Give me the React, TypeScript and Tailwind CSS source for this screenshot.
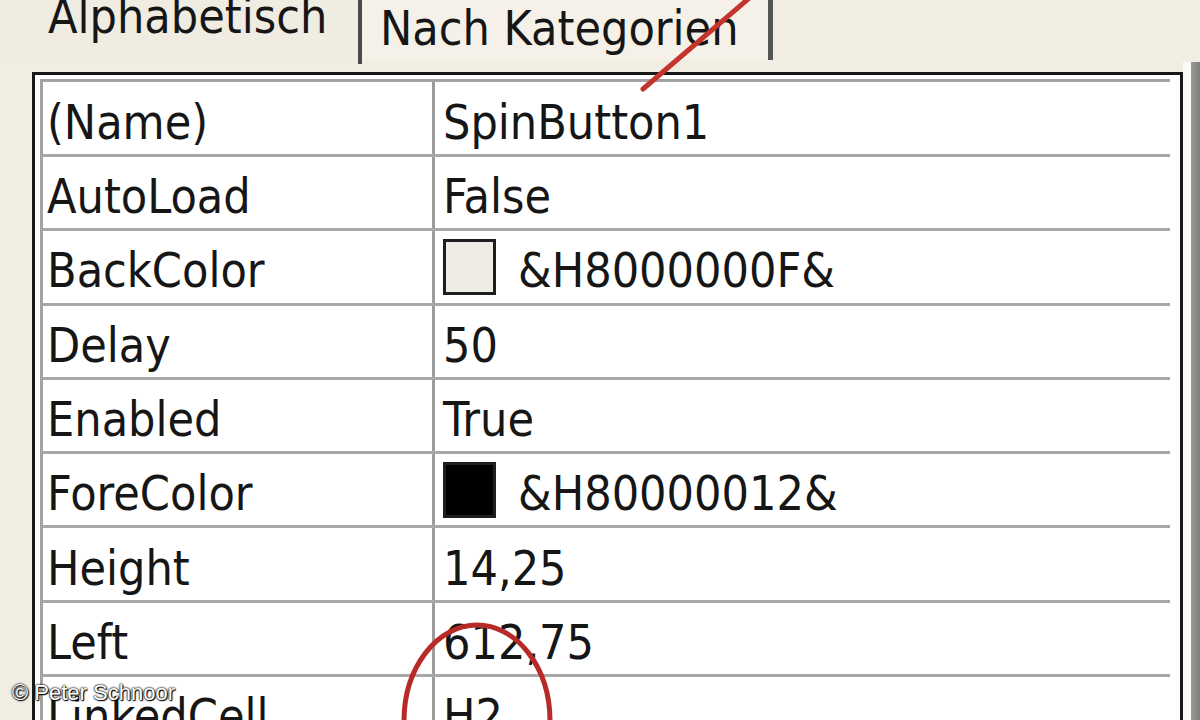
import React from "react";

type Row = { label: string; value: string; swatch?: "light" | "dark" };

const rows: Row[] = [
  { label: "(Name)", value: "SpinButton1" },
  { label: "AutoLoad", value: "False" },
  { label: "BackColor", value: "&H8000000F&", swatch: "light" },
  { label: "Delay", value: "50" },
  { label: "Enabled", value: "True" },
  { label: "ForeColor", value: "&H80000012&", swatch: "dark" },
  { label: "Height", value: "14,25" },
  { label: "Left", value: "612,75" },
  { label: "LinkedCell", value: "H2" },
];

export default function App() {
  return (
    <div
      className="relative w-[1200px] h-[720px] overflow-hidden bg-[#f2ede3] text-[#161616] flex flex-col"
      style={{ fontFamily: '"DejaVu Sans Condensed", "DejaVu Sans", sans-serif' }}
    >
      {/* Tabs */}
      <div className="flex h-[62px] shrink-0 items-start text-[48px] leading-none">
        <div className="w-[358px] h-[62px] pl-[48px] bg-[#f1ece2]">
          <span className="block -mt-[8px]">Alphabetisch</span>
        </div>
        <div className="w-[4px] h-[64px] bg-[#4a4a4a]"></div>
        <div className="w-[406px] h-[60px] pl-[18px] bg-[#f5f1e8]">
          <span className="block mt-[4px]">Nach Kategorien</span>
        </div>
        <div className="w-[5px] h-[60px] bg-[#555555]"></div>
        <div className="flex-1"></div>
      </div>

      {/* Body */}
      <div className="flex flex-1 min-h-0">
        <div className="w-[32px] shrink-0"></div>
        <div className="mt-[10px] w-[1151px] shrink-0 border-[3px] border-b-0 border-[#181818] bg-white pl-[5px] pt-[4px] pr-[10px]">
          <div className="border-l-[3px] border-t-[3px] border-[#a3a3a3] h-full">
            {rows.map((r, i) => (
              <div
                key={r.label}
                className={
                  (i === 0 ? "h-[75px] " : "h-[74.3px] ") +
                  "flex border-b-[3px] border-[#a8a8a8] text-[48px] leading-none"
                }
              >
                <div className="w-[389px] shrink-0 flex items-center pl-[4px] pt-[7px]">
                  {r.label}
                </div>
                <div className="w-[3px] shrink-0 bg-[#9c9c9c]"></div>
                <div className="flex-1 flex items-center pl-[8px] pt-[7px]">
                  {r.swatch && (
                    <span
                      className={
                        (r.swatch === "dark" ? "bg-black " : "bg-[#eeece5] ") +
                        "inline-block w-[53px] h-[56px] border-[3px] border-[#1e1e1e] mr-[22px] -mt-[7px]"
                      }
                    ></span>
                  )}
                  <span>{r.value}</span>
                </div>
              </div>
            ))}
          </div>
        </div>
        <div className="w-[8px] shrink-0 bg-[#fbfbf8]"></div>
        <div className="flex-1 bg-gradient-to-r from-[#9a9a96] to-[#7e7e7a]"></div>
      </div>

      {/* Annotations */}
      <svg
        className="absolute inset-0 pointer-events-none"
        width="1200"
        height="720"
        viewBox="0 0 1200 720"
      >
        <line x1="754" y1="-6" x2="643" y2="89" stroke="#c5342c" strokeWidth="5" strokeLinecap="round" />
        <ellipse cx="477" cy="721" rx="73" ry="96" fill="none" stroke="#b82a28" strokeWidth="5" />
      </svg>

      <div
        className="absolute left-[12px] top-[682px] text-[22px] text-white leading-none [text-shadow:0_0_2px_#000,0_0_2px_#000,1px_1px_1px_#000]"
        style={{ fontFamily: '"Liberation Sans", Arial, sans-serif' }}
      >
        © Peter Schnoor
      </div>
    </div>
  );
}
